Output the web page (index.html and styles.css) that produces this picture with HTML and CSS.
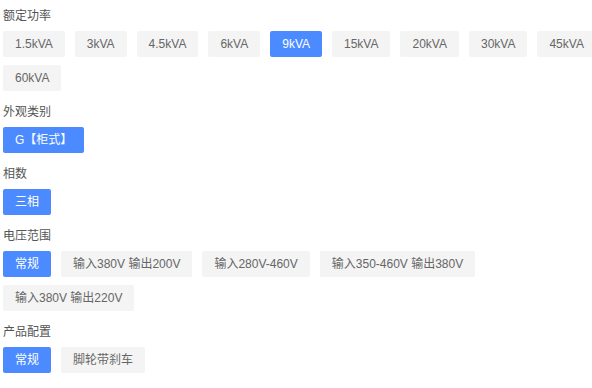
FILE: index.html
```html
<!DOCTYPE html>
<html lang="zh-CN">
<head>
<meta charset="UTF-8">
<meta name="viewport" content="width=device-width, initial-scale=1.0">
<title>产品选型</title>
<link rel="stylesheet" href="styles.css">
</head>
<body>
    <div class="spec">
        <div class="group">
            <div class="label">额定功率</div>
            <div class="opts">
                <span class="opt">1.5kVA</span>
                <span class="opt">3kVA</span>
                <span class="opt">4.5kVA</span>
                <span class="opt">6kVA</span>
                <span class="opt active">9kVA</span>
                <span class="opt">15kVA</span>
                <span class="opt">20kVA</span>
                <span class="opt">30kVA</span>
                <span class="opt">45kVA</span>
                <span class="opt">60kVA</span>
            </div>
        </div>
        <div class="group">
            <div class="label">外观类别</div>
            <div class="opts">
                <span class="opt active">G【柜式】</span>
            </div>
        </div>
        <div class="group">
            <div class="label">相数</div>
            <div class="opts">
                <span class="opt active">三相</span>
            </div>
        </div>
        <div class="group">
            <div class="label">电压范围</div>
            <div class="opts">
                <span class="opt active">常规</span>
                <span class="opt">输入380V 输出200V</span>
                <span class="opt">输入280V-460V</span>
                <span class="opt">输入350-460V 输出380V</span>
                <span class="opt">输入380V 输出220V</span>
            </div>
        </div>
        <div class="group">
            <div class="label">产品配置</div>
            <div class="opts">
                <span class="opt active">常规</span>
                <span class="opt">脚轮带刹车</span>
            </div>
        </div>
    </div>
</body>
</html>
```

FILE: styles.css
```css
html, body {
    margin: 0;
    overflow: hidden;
    background: #fff;
}
body {
    font-family: "Liberation Sans", Arial, "Noto Sans CJK SC", sans-serif;
    font-size: 12px;
    color: #555;
}
.spec {
    width: 600px;
    padding: 6px 0 0 3px;
}
.group {
    margin-bottom: 11px;
}
.label {
    line-height: 20px;
    margin-bottom: 5px;
    color: #555;
}
.opts {
    display: flex;
    flex-wrap: wrap;
    gap: 8px 10px;
}
.opt {
    display: block;
    height: 26px;
    line-height: 26px;
    padding: 0 12px;
    background-color: #f4f4f4;
    color: #666;
    border-radius: 2px;
    white-space: nowrap;
    cursor: pointer;
}
.opt.active {
    background-color: #4b8bff;
    color: #fff;
}
```
